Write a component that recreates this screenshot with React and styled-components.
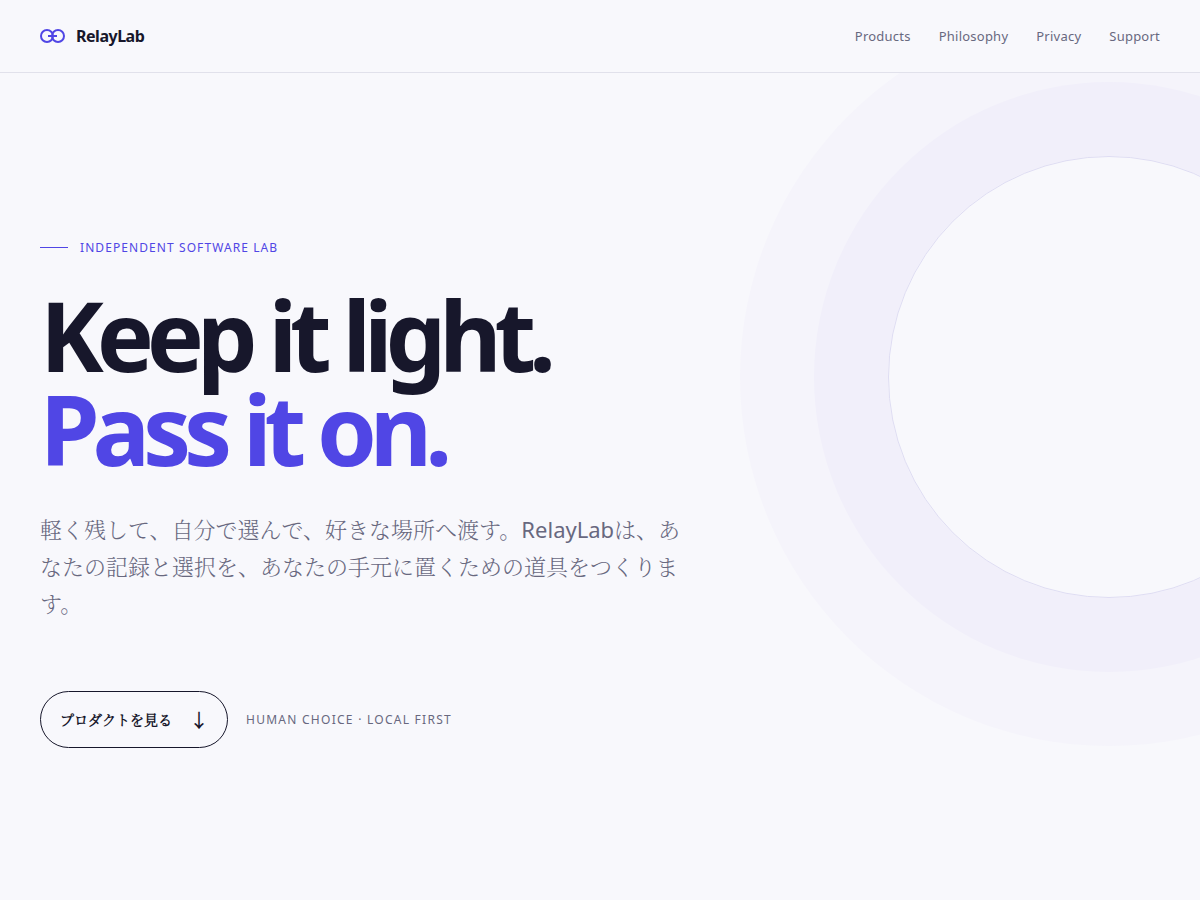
import styled, { createGlobalStyle } from 'styled-components';

const NAV_ITEMS = [
	{ label: 'Products', href: '#products' },
	{ label: 'Philosophy', href: '#philosophy' },
	{ label: 'Privacy', href: '#privacy' },
	{ label: 'Support', href: '#support' },
];

export default function App() {
	return (
		<>
			<GlobalStyle />
			<Header>
				<Brand href="#top">
					<BrandMark />
					RelayLab
				</Brand>
				<Nav>
					{NAV_ITEMS.map(({ label, href }) => (
						<NavLink key={label} href={href}>
							{label}
						</NavLink>
					))}
				</Nav>
			</Header>
			<Hero id="top" lang="ja">
				<Orbit />
				<Eyebrow>Independent software lab</Eyebrow>
				<Title>
					Keep it light.
					<Accent>Pass it on.</Accent>
				</Title>
				<Lead>軽く残して、自分で選んで、好きな場所へ渡す。RelayLabは、あなたの記録と選択を、あなたの手元に置くための道具をつくります。</Lead>
				<Actions>
					<ProductsLink href="#products">
						プロダクトを見る
						<Arrow aria-hidden="true">↓</Arrow>
					</ProductsLink>
					<Note>Human choice · Local first</Note>
				</Actions>
			</Hero>
		</>
	);
}

function BrandMark() {
	return (
		<svg width="26" height="16" viewBox="0 0 26 16" fill="none" stroke="#5046e5" strokeWidth="2" aria-hidden="true">
			<circle cx="7" cy="8" r="6" />
			<circle cx="18" cy="8" r="6" />
			<path d="M8 8h9" />
		</svg>
	);
}

const GlobalStyle = createGlobalStyle`
	* {
		box-sizing: border-box;
	}

	body {
		margin: 0;
		background: #f8f8fc;
		color: #17172b;
		font-family: 'Noto Sans', 'Noto Serif CJK JP Light', 'Noto Serif CJK JP', 'Noto Sans CJK JP', serif;
	}

	a {
		color: inherit;
		text-decoration: none;
	}
`;

const Header = styled.header`
	display: flex;
	align-items: center;
	justify-content: space-between;
	height: 73px;
	padding: 0 40px;
	border-bottom: 1px solid #e1e1eb;
`;

const Brand = styled.a`
	display: flex;
	align-items: center;
	gap: 10px;
	font-size: 16px;
	font-weight: 700;
	line-height: 20px;
	letter-spacing: -0.03em;
`;

const Nav = styled.nav`
	display: flex;
	gap: 28px;
`;

const NavLink = styled.a`
	color: #68687f;
	font-size: 13px;
	letter-spacing: 0.018em;
`;

const Hero = styled.main`
	position: relative;
	overflow: hidden;
	min-height: calc(100vh - 73px);
	padding: 164px 40px 80px;
`;

/* decorative rings bleeding off the right edge */
const Orbit = styled.div`
	position: absolute;
	z-index: -1;
	top: 83px;
	right: -130px;
	width: 442px;
	height: 442px;
	border: 1px solid #dfddf3;
	border-radius: 50%;
	box-shadow: 0 0 0 74px #f1effa, 0 0 0 148px #f5f4fb;
`;

const Eyebrow = styled.p`
	display: flex;
	align-items: center;
	gap: 12px;
	margin: 0 0 30px;
	color: #5046e5;
	font-size: 12px;
	line-height: 21px;
	letter-spacing: 0.09em;
	text-transform: uppercase;

	&::before {
		content: '';
		width: 28px;
		height: 1px;
		background: currentColor;
	}
`;

const Title = styled.h1`
	margin: 0;
	font-size: 96px;
	font-weight: 700;
	line-height: 94px;
	letter-spacing: -0.074em;
`;

const Accent = styled.span`
	display: block;
	color: #5046e5;
`;

const Lead = styled.p`
	max-width: 650px;
	margin: 35px 0 0;
	color: #68687f;
	font-size: 22px;
	line-height: 37px;
`;

const Actions = styled.div`
	display: flex;
	align-items: center;
	gap: 18px;
	margin-top: 69px;
`;

const ProductsLink = styled.a`
	display: flex;
	align-items: center;
	gap: 18px;
	min-height: 57px;
	padding: 0 19px;
	border: 1px solid #17172b;
	border-radius: 29px;
	font-size: 14px;
	font-weight: 700;
	line-height: 20px;
`;

const Arrow = styled.span`
	font-size: 18px;
`;

const Note = styled.span`
	color: #68687f;
	font-size: 12px;
	letter-spacing: 0.105em;
	text-transform: uppercase;
`;
